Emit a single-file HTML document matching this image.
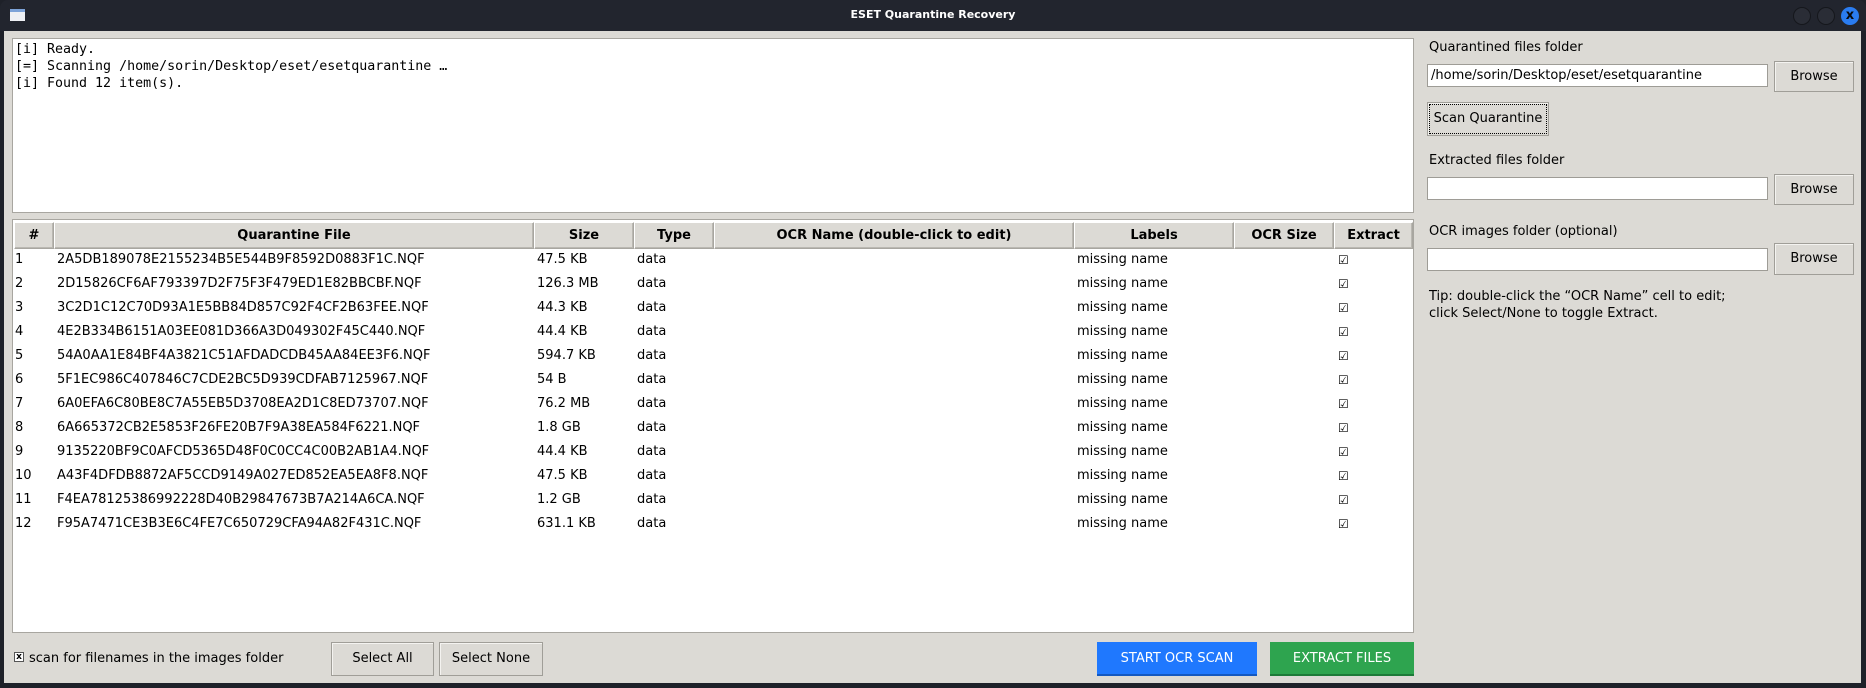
<!DOCTYPE html>
<html><head><meta charset="utf-8"><style>
*{margin:0;padding:0;box-sizing:border-box}
body{width:1866px;height:688px;background:#1e2129;overflow:hidden;position:relative;font-family:"DejaVu Sans","Liberation Sans",sans-serif;font-size:13px;color:#000}
.a{position:absolute}
#title{left:0;top:0;width:1866px;height:31px;background:#22252e;border-radius:8px 8px 0 0}
#title .t{left:0;width:1866px;top:8px;text-align:center;color:#fff;font-weight:bold;font-size:11px}
.circ{width:18px;height:18px;border-radius:50%;background:#2a2d36;border:1px solid #15171c;top:7px}
#body{left:4px;top:31px;width:1857px;height:652px;background:#dcdad5}
#log{left:12px;top:38px;width:1402px;height:175px;background:#fff;border:1px solid #a8a6a0;font-family:"DejaVu Sans Mono","Liberation Mono",monospace;font-size:13.3px;line-height:17px;padding:2px 0 0 2px;white-space:pre}
#tbl{left:12px;top:219px;width:1402px;height:414px;background:#fff;border:1px solid #a8a6a0}
.h{top:2px;height:27px;background:#dcdad5;border:1px solid #a8a6a0;border-top-color:#fff;border-left-color:#fff;font-weight:bold;text-align:center;line-height:25px;box-shadow:inset -1px -1px 0 #bab8b2}
.row{left:0;height:24px;line-height:24px;width:1400px}
.row span{position:absolute;white-space:nowrap}
.lbl{left:1429px}
.ent{background:#fff;border:1px solid #9e9c96;left:1427px;width:341px;height:23px;padding-left:3px;line-height:21px}
.btn{background:#dcdad5;border:1px solid #a09e98;text-align:center;box-shadow:inset 1px 1px 0 #f4f3f0}
</style></head><body>
<div id="title" class="a">
<div class="a" style="left:10px;top:9px;width:15px;height:12px;background:#eef0f4;border-top:3px solid #7da3d8"></div>
<div class="a t">ESET Quarantine Recovery</div>
<div class="a circ" style="left:1793px"></div>
<div class="a circ" style="left:1817px"></div>
<div class="a circ" style="left:1841px;background:#2a7cf0;border-color:#2a7cf0;color:#0a0a0a;font-weight:bold;font-size:13px;line-height:16px;text-align:center">x</div>
</div>
<div id="body" class="a"></div>
<div id="log" class="a">[i] Ready.
[=] Scanning /home/sorin/Desktop/eset/esetquarantine …
[i] Found 12 item(s).</div>
<div id="tbl" class="a">
<div class="a h" style="left:1px;width:40px">#</div>
<div class="a h" style="left:41px;width:480px">Quarantine File</div>
<div class="a h" style="left:521px;width:100px">Size</div>
<div class="a h" style="left:621px;width:80px">Type</div>
<div class="a h" style="left:701px;width:360px">OCR Name (double-click to edit)</div>
<div class="a h" style="left:1061px;width:160px">Labels</div>
<div class="a h" style="left:1221px;width:100px">OCR Size</div>
<div class="a h" style="left:1321px;width:79px">Extract</div>
<div id="rows"></div>
</div>
<div class="a lbl" style="top:40px">Quarantined files folder</div>
<div class="a ent" style="top:64px">/home/sorin/Desktop/eset/esetquarantine</div>
<div class="a btn" style="left:1774px;top:61px;width:80px;height:31px;line-height:29px">Browse</div>
<div class="a btn" style="left:1427px;top:102px;width:122px;height:34px;line-height:32px;outline:1px dotted #000;outline-offset:-3px">Scan Quarantine</div>
<div class="a lbl" style="top:153px">Extracted files folder</div>
<div class="a ent" style="top:177px"></div>
<div class="a btn" style="left:1774px;top:174px;width:80px;height:31px;line-height:29px">Browse</div>
<div class="a lbl" style="top:224px">OCR images folder (optional)</div>
<div class="a ent" style="top:248px"></div>
<div class="a btn" style="left:1774px;top:243px;width:80px;height:32px;line-height:30px">Browse</div>
<div class="a lbl" style="top:288px;line-height:17px">Tip: double-click the “OCR Name” cell to edit;<br>click Select/None to toggle Extract.</div>
<div class="a" style="left:14px;top:652px;width:10px;height:10px;background:#fff;border:1px solid #555;font-size:9px;line-height:8px;text-align:center;font-weight:bold">x</div>
<div class="a" style="left:29px;top:651px">scan for filenames in the images folder</div>
<div class="a btn" style="left:331px;top:642px;width:103px;height:34px;line-height:32px">Select All</div>
<div class="a btn" style="left:439px;top:642px;width:104px;height:34px;line-height:32px">Select None</div>
<div class="a" style="left:1097px;top:642px;width:160px;height:34px;line-height:33px;background:#1f78fe;color:#fff;text-align:center;border-bottom:2px solid #1358c0">START OCR SCAN</div>
<div class="a" style="left:1270px;top:642px;width:144px;height:34px;line-height:33px;background:#2ea44f;color:#fff;text-align:center;border-bottom:2px solid #1d7a38">EXTRACT FILES</div>
<script>
var d=[["2A5DB189078E2155234B5E544B9F8592D0883F1C.NQF","47.5 KB"],["2D15826CF6AF793397D2F75F3F479ED1E82BBCBF.NQF","126.3 MB"],["3C2D1C12C70D93A1E5BB84D857C92F4CF2B63FEE.NQF","44.3 KB"],["4E2B334B6151A03EE081D366A3D049302F45C440.NQF","44.4 KB"],["54A0AA1E84BF4A3821C51AFDADCDB45AA84EE3F6.NQF","594.7 KB"],["5F1EC986C407846C7CDE2BC5D939CDFAB7125967.NQF","54 B"],["6A0EFA6C80BE8C7A55EB5D3708EA2D1C8ED73707.NQF","76.2 MB"],["6A665372CB2E5853F26FE20B7F9A38EA584F6221.NQF","1.8 GB"],["9135220BF9C0AFCD5365D48F0C0CC4C00B2AB1A4.NQF","44.4 KB"],["A43F4DFDB8872AF5CCD9149A027ED852EA5EA8F8.NQF","47.5 KB"],["F4EA78125386992228D40B29847673B7A214A6CA.NQF","1.2 GB"],["F95A7471CE3B3E6C4FE7C650729CFA94A82F431C.NQF","631.1 KB"]];
var h="";d.forEach(function(r,i){h+='<div class="a row" style="top:'+(28+i*24)+'px"><span style="left:2px">'+(i+1)+'</span><span style="left:44px">'+r[0]+'</span><span style="left:524px">'+r[1]+'</span><span style="left:624px">data</span><span style="left:1064px">missing name</span><span style="left:1325px;font-size:12px">☑</span></div>'});
document.getElementById("rows").innerHTML=h;
</script>
</body></html>
